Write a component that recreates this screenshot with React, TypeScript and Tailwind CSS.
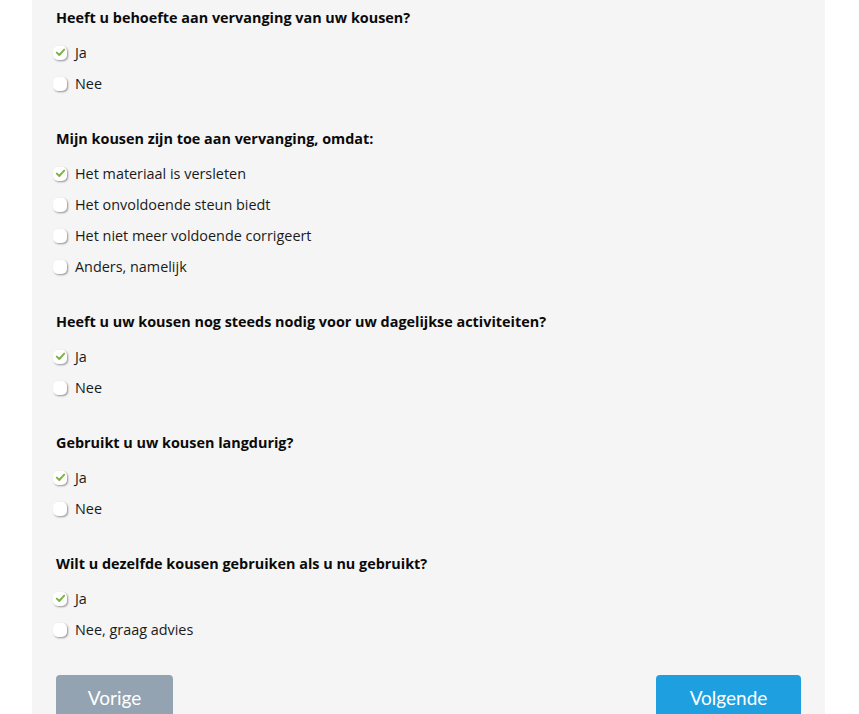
import { useState } from "react";

interface Question {
  title: string;
  options: string[];
  checked: number;
}

const questions: Question[] = [
  { title: "Heeft u behoefte aan vervanging van uw kousen?", options: ["Ja", "Nee"], checked: 0 },
  {
    title: "Mijn kousen zijn toe aan vervanging, omdat:",
    options: [
      "Het materiaal is versleten",
      "Het onvoldoende steun biedt",
      "Het niet meer voldoende corrigeert",
      "Anders, namelijk",
    ],
    checked: 0,
  },
  {
    title: "Heeft u uw kousen nog steeds nodig voor uw dagelijkse activiteiten?",
    options: ["Ja", "Nee"],
    checked: 0,
  },
  { title: "Gebruikt u uw kousen langdurig?", options: ["Ja", "Nee"], checked: 0 },
  {
    title: "Wilt u dezelfde kousen gebruiken als u nu gebruikt?",
    options: ["Ja", "Nee, graag advies"],
    checked: 0,
  },
];

function CheckBox({ checked }: { checked: boolean }) {
  return (
    <span className="w-[14px] h-[14px] rounded-[5px] bg-white shadow-[1px_1px_2px_rgba(0,0,0,0.4)] flex items-center justify-center shrink-0">
      {checked && (
        <svg width="11" height="11" viewBox="0 0 11 11">
          <path d="M1.8 5.6 L4.3 8 L9.2 2.6" fill="none" stroke="#7cb342" strokeWidth="1.9" strokeLinecap="round" strokeLinejoin="round" />
        </svg>
      )}
    </span>
  );
}

function QuestionBlock({ q }: { q: Question }) {
  const [checked, setChecked] = useState(q.checked);
  return (
    <div>
      <h3 className="text-[14.4px] leading-[20px] font-bold text-[#0a0a0a]">{q.title}</h3>
      <div className="mt-[9px]">
        {q.options.map((opt, i) => (
          <label
            key={opt}
            onClick={() => setChecked(i)}
            className="h-[31px] flex items-center gap-[8px] -ml-[3px] cursor-pointer text-[14.4px] text-[#1a1a1a]"
          >
            <CheckBox checked={checked === i} />
            <span>{opt}</span>
          </label>
        ))}
      </div>
    </div>
  );
}

export default function App() {
  return (
    <div className="min-h-[714px] bg-white overflow-hidden" style={{ fontFamily: '"Open Sans", "Liberation Sans", sans-serif' }}>
      <div className="ml-[32px] w-[793px] min-h-[714px] bg-[#f5f5f5] pl-[24px] pr-[24px] pt-[8px]">
        <div className="flex flex-col gap-[30px]">
          {questions.map((q) => (
            <QuestionBlock key={q.title} q={q} />
          ))}
        </div>
        <div className="flex justify-between mt-[30px]">
          <button
            className="w-[117px] h-[46px] rounded-[4px] bg-[#94a3b2] text-white text-[19px]"
            style={{ fontFamily: 'Lato, "Liberation Sans", sans-serif' }}
          >
            Vorige
          </button>
          <button
            className="w-[145px] h-[46px] rounded-[4px] bg-[#1ea0e0] text-white text-[19px]"
            style={{ fontFamily: 'Lato, "Liberation Sans", sans-serif' }}
          >
            Volgende
          </button>
        </div>
      </div>
    </div>
  );
}
